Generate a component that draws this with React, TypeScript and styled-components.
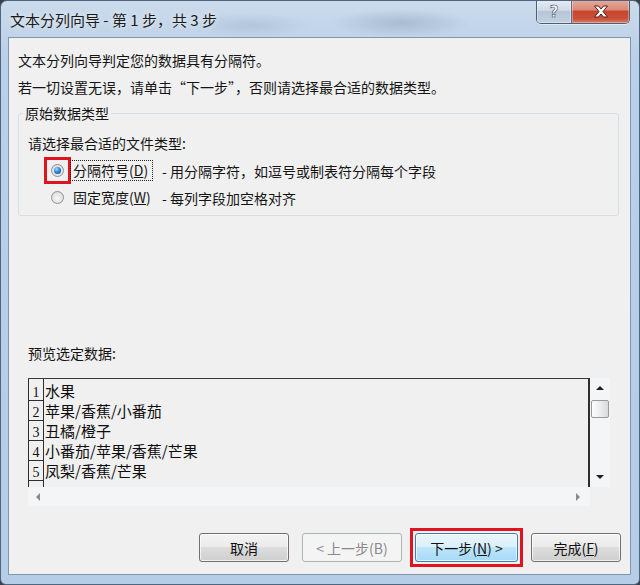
import React from "react";
import styled, { createGlobalStyle, css } from "styled-components";

const GlobalStyle = createGlobalStyle`
  html, body { margin: 0; padding: 0; background: #3b4047; }
  body { font-family: "Noto Sans CJK SC", "Noto Sans", sans-serif; }
  #root { width: 640px; height: 585px; }
`;

const Window = styled.div`
  width: 640px;
  height: 585px;
  box-sizing: border-box;
  display: flex;
  flex-direction: column;
  border: 1px solid #50657e;
  border-radius: 7px 7px 6px 6px;
  overflow: hidden;
  background:
    radial-gradient(ellipse 70px 14px at 400px 22px, rgba(120, 138, 160, 0.35), transparent),
    radial-gradient(ellipse 60px 12px at 250px 24px, rgba(130, 148, 170, 0.25), transparent),
    linear-gradient(180deg, #cbdbec 0px, #c0d3e8 36px, #b9d0ea 60px, #b6cde8 100%);
`;

const TitleBar = styled.div`
  height: 36px;
  flex-shrink: 0;
  display: flex;
  align-items: flex-start;
  padding: 0 9px;
`;

const TitleText = styled.div`
  margin-top: 9px;
  font-size: 15px;
  line-height: 20px;
  color: #1b1b1b;
  text-shadow: 0 0 6px rgba(255, 255, 255, 0.9);
  white-space: pre;
`;

const Controls = styled.div`
  margin-left: auto;
  margin-top: -1px;
  display: flex;
  height: 23px;
  border: 1px solid #4f5f73;
  border-top: none;
  border-radius: 0 0 5px 5px;
  overflow: hidden;
  box-shadow: 0 1px 0 rgba(255, 255, 255, 0.5);
`;

const CtrlButton = styled.div<{ $close?: boolean }>`
  display: flex;
  align-items: center;
  justify-content: center;
  width: ${(p) => (p.$close ? 57 : 34)}px;
  box-shadow: inset 0 0 0 1px rgba(255, 255, 255, 0.35);
  background: ${(p) =>
    p.$close
      ? "linear-gradient(180deg, #e9ab9c 0%, #d98a77 42%, #c8452e 50%, #c9503a 80%, #d77a60 100%)"
      : "linear-gradient(180deg, #e6edf4 0%, #cfdae6 45%, #b6c6d8 50%, #c2d1e1 100%)"};
  & + & {
    border-left: 1px solid #5f6f83;
  }
`;

const HelpGlyph = styled.span`
  font-family: "DejaVu Sans", sans-serif;
  font-weight: bold;
  font-size: 15px;
  line-height: 1;
  color: #fff;
  -webkit-text-stroke: 0.6px #3a4a5e;
  margin-top: 1px;
`;

const Client = styled.div`
  flex: 1;
  margin: 0 8px 9px 7px;
  border: 1px solid #8195ad;
  background: #f0f0f0;
  padding: 12px 9px 12px 9px;
  display: flex;
  flex-direction: column;
  color: #141414;
`;

const Para = styled.p<{ $gap?: number }>`
  margin: ${(p) => p.$gap ?? 0}px 0 0;
  font-size: 14px;
  line-height: 20px;
  white-space: nowrap;
`;

const Group = styled.fieldset`
  margin: 6px 2px 0 0;
  padding: 0 0 7px 0;
  border: 1px solid #d5dfe5;
  border-radius: 3px;
  min-width: 0;
`;

const Legend = styled.legend`
  margin-left: 4px;
  padding: 0 2px;
  font-size: 14px;
  line-height: 20px;
`;

const GroupBody = styled.div`
  padding: 10px 0 0 9px;
  display: flex;
  flex-direction: column;
`;

const Caption = styled.div`
  font-size: 14px;
  line-height: 20px;
`;

const RadioRow = styled.div<{ $gap: number }>`
  display: flex;
  align-items: center;
  height: 21px;
  margin-top: ${(p) => p.$gap}px;
  padding-left: 23px;
  font-size: 14px;
`;

const RadioWrap = styled.span<{ $marked?: boolean }>`
  display: inline-flex;
  flex-shrink: 0;
  ${(p) =>
    p.$marked &&
    css`
      outline: 3px solid #e0141e;
      outline-offset: 4px;
    `}
`;

const RadioDot = styled.span<{ $checked?: boolean }>`
  width: 13px;
  height: 13px;
  box-sizing: border-box;
  border-radius: 50%;
  border: 1px solid #8e9295;
  background: radial-gradient(circle at 50% 55%, #f7f7f7 0, #e4e4e4 55%, #cfd0d1 100%);
  display: flex;
  align-items: center;
  justify-content: center;
  &::after {
    content: "";
    display: ${(p) => (p.$checked ? "block" : "none")};
    width: 7px;
    height: 7px;
    border-radius: 50%;
    background: radial-gradient(circle at 38% 32%, #a9dcff 0, #2f86d8 45%, #0b3f80 100%);
  }
`;

const RadioLabel = styled.span<{ $focus?: boolean }>`
  width: 83px;
  height: 21px;
  box-sizing: border-box;
  margin-left: 6px;
  padding: 0 2px;
  line-height: 19px;
  border: 1px dotted ${(p) => (p.$focus ? "#222" : "transparent")};
  white-space: nowrap;
  flex-shrink: 0;
`;

const RadioDesc = styled.span`
  margin-left: 9px;
  white-space: pre;
  line-height: 20px;
`;

const PreviewLabel = styled.div`
  margin-top: auto;
  margin-left: 10px;
  font-size: 14px;
  line-height: 20px;
`;

const Preview = styled.div`
  margin: 15px 0 0 10px;
  display: grid;
  grid-template-columns: 562px 20px;
  grid-template-rows: 109px 19px;
`;

const PreviewBox = styled.div`
  box-sizing: border-box;
  border-top: 1px solid #3a3a3a;
  border-right: 2px solid #2e2e2e;
  display: flex;
  overflow: hidden;
`;

const NumberCol = styled.div`
  width: 16px;
  flex-shrink: 0;
  box-sizing: border-box;
  border-left: 1px solid #2e2e2e;
  border-right: 1px solid #2e2e2e;
  padding-top: 2px;
  display: flex;
  flex-direction: column;
`;

const NumberCell = styled.div`
  height: 20px;
  flex-shrink: 0;
  box-sizing: border-box;
  border-bottom: 1px solid #2e2e2e;
  display: flex;
  align-items: flex-end;
  justify-content: center;
  font-family: "Liberation Serif", serif;
  font-size: 14px;
  line-height: 15px;
  color: #111;
`;

const RowsCol = styled.div`
  padding: 2px 0 0 1px;
  display: flex;
  flex-direction: column;
`;

const DataRow = styled.div`
  font-size: 15px;
  line-height: 20px;
  height: 20px;
  white-space: nowrap;
  color: #0d0d0d;
`;

const VScroll = styled.div`
  background: #f4f5f6;
  display: flex;
  flex-direction: column;
  align-items: center;
`;

const ArrowSlot = styled.div`
  height: 20px;
  width: 100%;
  display: flex;
  align-items: center;
  justify-content: center;
  flex-shrink: 0;
`;

const Arrow = styled.span<{ $dir: "up" | "down" | "left" | "right"; $dim?: boolean }>`
  width: 0;
  height: 0;
  ${(p) => {
    const c = p.$dim ? "#8b8b8b" : "#1e1e1e";
    switch (p.$dir) {
      case "up":
        return css`border-left: 4px solid transparent; border-right: 4px solid transparent; border-bottom: 4px solid ${c};`;
      case "down":
        return css`border-left: 4px solid transparent; border-right: 4px solid transparent; border-top: 4px solid ${c};`;
      case "left":
        return css`border-top: 4px solid transparent; border-bottom: 4px solid transparent; border-right: 4px solid ${c};`;
      default:
        return css`border-top: 4px solid transparent; border-bottom: 4px solid transparent; border-left: 4px solid ${c};`;
    }
  }}
`;

const Thumb = styled.div`
  margin-top: 2px;
  width: 18px;
  height: 18px;
  box-sizing: border-box;
  border: 1px solid #979a9d;
  border-radius: 2px;
  background: linear-gradient(90deg, #fdfdfd 0%, #eceded 50%, #d9dadb 100%);
`;

const Spacer = styled.div`
  flex: 1;
`;

const HScroll = styled.div`
  background: #f4f5f6;
  display: flex;
  align-items: center;
  justify-content: space-between;
  padding: 0 10px 0 8px;
`;

const ButtonRow = styled.div`
  margin-top: 27px;
  display: flex;
  justify-content: flex-end;
  gap: 13px;
`;

const MarkFrame = styled.span`
  display: inline-flex;
  outline: 3px solid #e0141e;
  outline-offset: 2px;
`;

const Button = styled.button<{ $w: number; $primary?: boolean }>`
  width: ${(p) => p.$w}px;
  height: 29px;
  box-sizing: border-box;
  padding: 0;
  font-family: "Noto Sans CJK SC", "Noto Sans", sans-serif;
  font-size: 14px;
  line-height: 1;
  color: #111;
  border: 1px solid #707070;
  border-radius: 3px;
  box-shadow: inset 0 0 0 1px rgba(255, 255, 255, 0.7);
  background: linear-gradient(180deg, #f3f3f3 0%, #ebebeb 48%, #dddddd 50%, #cfcfcf 100%);
  ${(p) =>
    p.$primary &&
    css`
      border-color: #3c7fb1;
      background: linear-gradient(180deg, #eaf6fd 0%, #d9f0fc 48%, #bee6fd 50%, #a7d9f5 100%);
    `}
  ${(p) =>
    p.disabled &&
    css`
      color: #8a8a8a;
      border-color: #adb2b5;
      background: #f4f4f4;
      box-shadow: none;
    `}
`;

const rows = ["水果", "苹果/香蕉/小番茄", "丑橘/橙子", "小番茄/苹果/香蕉/芒果", "凤梨/香蕉/芒果"];

export default function App() {
  return (
    <>
      <GlobalStyle />
      <Window>
        <TitleBar>
          <TitleText>文本分列向导 - 第 1 步，共 3 步</TitleText>
          <Controls>
            <CtrlButton>
              <HelpGlyph>?</HelpGlyph>
            </CtrlButton>
            <CtrlButton $close>
              <svg width="16" height="13" viewBox="0 0 16 13">
                <path
                  d="M1.5 1 H5.5 L8 4 L10.5 1 H14.5 L10 6.5 L14.5 12 H10.5 L8 9 L5.5 12 H1.5 L6 6.5 Z"
                  fill="#fff"
                  stroke="#5a1f14"
                  strokeWidth="1"
                  strokeLinejoin="round"
                />
              </svg>
            </CtrlButton>
          </Controls>
        </TitleBar>
        <Client>
          <Para>文本分列向导判定您的数据具有分隔符。</Para>
          <Para $gap={7}>若一切设置无误，请单击“下一步”，否则请选择最合适的数据类型。</Para>
          <Group>
            <Legend>原始数据类型</Legend>
            <GroupBody>
              <Caption>请选择最合适的文件类型:</Caption>
              <RadioRow $gap={7}>
                <RadioWrap $marked>
                  <RadioDot $checked />
                </RadioWrap>
                <RadioLabel $focus>
                  分隔符号(<u>D</u>)
                </RadioLabel>
                <RadioDesc>- 用分隔字符，如逗号或制表符分隔每个字段</RadioDesc>
              </RadioRow>
              <RadioRow $gap={6}>
                <RadioWrap>
                  <RadioDot />
                </RadioWrap>
                <RadioLabel>
                  固定宽度(<u>W</u>)
                </RadioLabel>
                <RadioDesc>- 每列字段加空格对齐</RadioDesc>
              </RadioRow>
            </GroupBody>
          </Group>
          <PreviewLabel>预览选定数据:</PreviewLabel>
          <Preview>
            <PreviewBox>
              <NumberCol>
                {[1, 2, 3, 4, 5, 6].map((n) => (
                  <NumberCell key={n}>{n <= 5 ? n : ""}</NumberCell>
                ))}
              </NumberCol>
              <RowsCol>
                {rows.map((r) => (
                  <DataRow key={r}>{r}</DataRow>
                ))}
              </RowsCol>
            </PreviewBox>
            <VScroll>
              <ArrowSlot>
                <Arrow $dir="up" />
              </ArrowSlot>
              <Thumb />
              <Spacer />
              <ArrowSlot>
                <Arrow $dir="down" />
              </ArrowSlot>
            </VScroll>
            <HScroll>
              <Arrow $dir="left" $dim />
              <Arrow $dir="right" $dim />
            </HScroll>
            <div />
          </Preview>
          <ButtonRow>
            <Button $w={90}>取消</Button>
            <Button $w={100} disabled>
              &lt; 上一步(B)
            </Button>
            <MarkFrame>
              <Button $w={103} $primary>
                下一步(<u>N</u>) &gt;
              </Button>
            </MarkFrame>
            <Button $w={90}>
              完成(<u>F</u>)
            </Button>
          </ButtonRow>
        </Client>
      </Window>
    </>
  );
}
